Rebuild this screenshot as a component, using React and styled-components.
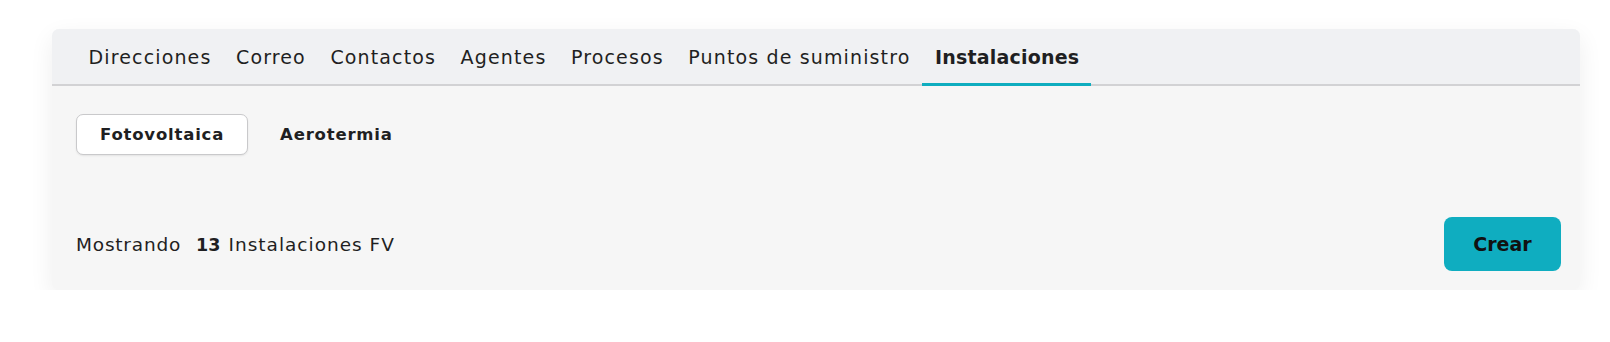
import { useState } from "react";
import styled, { createGlobalStyle } from "styled-components";

const GlobalStyle = createGlobalStyle`
  body {
    margin: 0;
    background: #ffffff;
    font-family: "DejaVu Sans", Inter, sans-serif;
    color: #1f1f22;
  }
`;

const Page = styled.div`
  padding: 29px 30px 0 52px;
`;

const Card = styled.div`
  background: #f6f6f6;
  border-radius: 7px;
  box-shadow: 0 8px 24px rgba(0, 0, 0, 0.07);
  overflow: hidden;
`;

const TabBar = styled.nav`
  display: flex;
  padding: 0 24px;
  height: 55px;
  background: #f0f1f3;
  border-bottom: 2px solid #d2d2d4;
`;

const Tab = styled.button`
  border: none;
  background: none;
  padding: 1px 12px 0 12.5px;
  margin-bottom: -2px;
  font-family: inherit;
  font-size: 19px;
  letter-spacing: ${(p) => (p.$active ? "0.2px" : "1.14px")};
  font-weight: ${(p) => (p.$active ? 700 : 400)};
  color: #1f1f22;
  border-bottom: 3px solid ${(p) => (p.$active ? "#0fadbf" : "transparent")};
  cursor: pointer;
`;

const Body = styled.div`
  padding: 28px 19px 19px 24px;
`;

const Segments = styled.div`
  display: flex;
  gap: 8px;
`;

const Segment = styled.button`
  height: 41px;
  padding: 0 23px;
  font-family: inherit;
  font-size: 16.5px;
  letter-spacing: 0.8px;
  font-weight: 700;
  color: #1f1f22;
  background: ${(p) => (p.$active ? "#ffffff" : "transparent")};
  border: 1px solid ${(p) => (p.$active ? "#c9c9cb" : "transparent")};
  border-radius: 7px;
  box-shadow: ${(p) => (p.$active ? "0 1px 2px rgba(0,0,0,0.08)" : "none")};
  cursor: pointer;
`;

const Footer = styled.div`
  display: flex;
  align-items: center;
  justify-content: space-between;
  margin-top: 62px;
`;

const Summary = styled.p`
  margin: 0;
  font-size: 18.5px;
  letter-spacing: 0.8px;
  color: #1f1f22;

  strong {
    font-weight: 700;
    font-size: 17.5px;
    letter-spacing: 0;
    margin: 0 8px 0 15px;
  }
`;

const Label = styled.span`
  letter-spacing: 1px;
`;

const CreateButton = styled.button`
  width: 117px;
  height: 54px;
  border: none;
  border-radius: 8px;
  background: #0fadc0;
  font-family: inherit;
  font-size: 19px;
  font-weight: 700;
  color: #111;
  cursor: pointer;
`;

const tabs = [
  "Direcciones",
  "Correo",
  "Contactos",
  "Agentes",
  "Procesos",
  "Puntos de suministro",
  "Instalaciones",
];

export default function App() {
  const [tab, setTab] = useState("Instalaciones");
  const [kind, setKind] = useState("Fotovoltaica");

  return (
    <Page>
      <GlobalStyle />
      <Card>
        <TabBar>
          {tabs.map((t) => (
            <Tab key={t} $active={t === tab} onClick={() => setTab(t)}>
              {t}
            </Tab>
          ))}
        </TabBar>
        <Body>
          <Segments>
            {["Fotovoltaica", "Aerotermia"].map((k) => (
              <Segment key={k} $active={k === kind} onClick={() => setKind(k)}>
                {k}
              </Segment>
            ))}
          </Segments>
          <Footer>
            <Summary>
              Mostrando<strong>13</strong>
              <Label>Instalaciones FV</Label>
            </Summary>
            <CreateButton>Crear</CreateButton>
          </Footer>
        </Body>
      </Card>
    </Page>
  );
}
